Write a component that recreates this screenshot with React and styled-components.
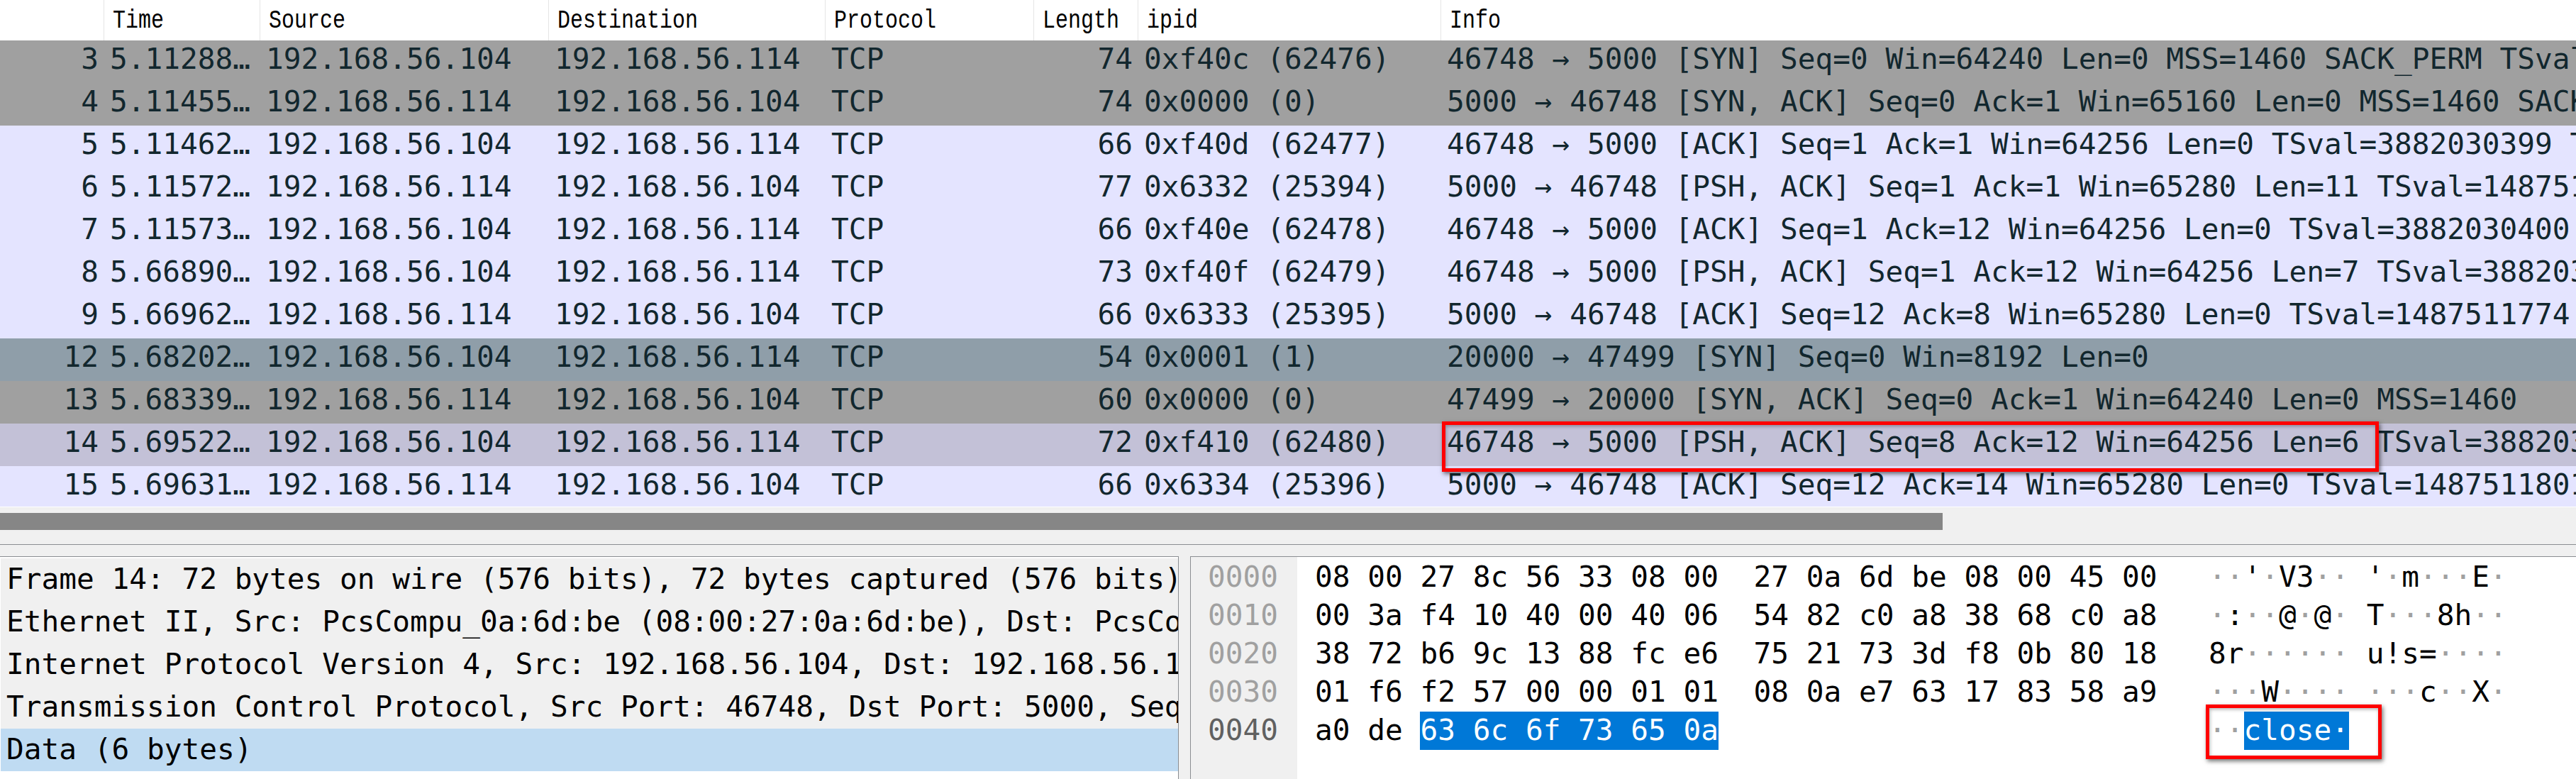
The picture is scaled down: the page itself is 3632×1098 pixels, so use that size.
import styled, { createGlobalStyle } from "styled-components";

const MONO = `"DejaVu Sans Mono", "Liberation Mono", monospace`;

const COLUMNS = "147px 220px 407px 390px 294px 147px 427px 1fr";

const columns = [
  { label: "" },
  { label: "Time" },
  { label: "Source" },
  { label: "Destination" },
  { label: "Protocol" },
  { label: "Length" },
  { label: "ipid" },
  { label: "Info" },
];

const ME = "192.168.56.104";
const PEER = "192.168.56.114";

const packets = [
  { no: 3, time: "5.11288…", src: ME, dst: PEER, len: 74, ipid: "0xf40c (62476)", info: "46748 → 5000 [SYN] Seq=0 Win=64240 Len=0 MSS=1460 SACK_PERM TSval", tone: "grey" },
  { no: 4, time: "5.11455…", src: PEER, dst: ME, len: 74, ipid: "0x0000 (0)", info: "5000 → 46748 [SYN, ACK] Seq=0 Ack=1 Win=65160 Len=0 MSS=1460 SACK", tone: "grey" },
  { no: 5, time: "5.11462…", src: ME, dst: PEER, len: 66, ipid: "0xf40d (62477)", info: "46748 → 5000 [ACK] Seq=1 Ack=1 Win=64256 Len=0 TSval=3882030399 T", tone: "light" },
  { no: 6, time: "5.11572…", src: PEER, dst: ME, len: 77, ipid: "0x6332 (25394)", info: "5000 → 46748 [PSH, ACK] Seq=1 Ack=1 Win=65280 Len=11 TSval=148751", tone: "light" },
  { no: 7, time: "5.11573…", src: ME, dst: PEER, len: 66, ipid: "0xf40e (62478)", info: "46748 → 5000 [ACK] Seq=1 Ack=12 Win=64256 Len=0 TSval=3882030400", tone: "light" },
  { no: 8, time: "5.66890…", src: ME, dst: PEER, len: 73, ipid: "0xf40f (62479)", info: "46748 → 5000 [PSH, ACK] Seq=1 Ack=12 Win=64256 Len=7 TSval=388203", tone: "light" },
  { no: 9, time: "5.66962…", src: PEER, dst: ME, len: 66, ipid: "0x6333 (25395)", info: "5000 → 46748 [ACK] Seq=12 Ack=8 Win=65280 Len=0 TSval=1487511774", tone: "light" },
  { no: 12, time: "5.68202…", src: ME, dst: PEER, len: 54, ipid: "0x0001 (1)", info: "20000 → 47499 [SYN] Seq=0 Win=8192 Len=0", tone: "slate" },
  { no: 13, time: "5.68339…", src: PEER, dst: ME, len: 60, ipid: "0x0000 (0)", info: "47499 → 20000 [SYN, ACK] Seq=0 Ack=1 Win=64240 Len=0 MSS=1460", tone: "grey" },
  { no: 14, time: "5.69522…", src: ME, dst: PEER, len: 72, ipid: "0xf410 (62480)", info: "46748 → 5000 [PSH, ACK] Seq=8 Ack=12 Win=64256 Len=6 TSval=388203", tone: "picked", marked: true },
  { no: 15, time: "5.69631…", src: PEER, dst: ME, len: 66, ipid: "0x6334 (25396)", info: "5000 → 46748 [ACK] Seq=12 Ack=14 Win=65280 Len=0 TSval=1487511801", tone: "light", short: true },
];

const details = [
  "Frame 14: 72 bytes on wire (576 bits), 72 bytes captured (576 bits)",
  "Ethernet II, Src: PcsCompu_0a:6d:be (08:00:27:0a:6d:be), Dst: PcsCo",
  "Internet Protocol Version 4, Src: 192.168.56.104, Dst: 192.168.56.1",
  "Transmission Control Protocol, Src Port: 46748, Dst Port: 5000, Seq",
];

const dump = [
  { offset: "0000", hex: "08 00 27 8c 56 33 08 00  27 0a 6d be 08 00 45 00", ascii: "··'·V3·· '·m···E·" },
  { offset: "0010", hex: "00 3a f4 10 40 00 40 06  54 82 c0 a8 38 68 c0 a8", ascii: "·:··@·@· T···8h··" },
  { offset: "0020", hex: "38 72 b6 9c 13 88 fc e6  75 21 73 3d f8 0b 80 18", ascii: "8r······ u!s=····" },
  { offset: "0030", hex: "01 f6 f2 57 00 00 01 01  08 0a e7 63 17 83 58 a9", ascii: "···W···· ···c··X·" },
  { offset: "0040", hex: "a0 de ", picked: "63 6c 6f 73 65 0a", ascii: "··", pickedAscii: "close·", active: true },
];

const toneColors = {
  grey: "#a0a0a0",
  light: "#e4e4ff",
  slate: "#8f9ea9",
  picked: "#c3c1d7",
};

const GlobalStyle = createGlobalStyle`
  html, body {
    margin: 0;
    padding: 0;
    background: #f0f0f0;
  }
`;

const Window = styled.div`
  width: 3632px;
  height: 1098px;
  overflow: hidden;
  display: flex;
  flex-direction: column;
  background: #f0f0f0;
  font-family: ${MONO};
  font-size: 41.1px;
`;

const HeaderRow = styled.div`
  display: grid;
  grid-template-columns: ${COLUMNS};
  height: 57px;
  background: #fff;
`;

const HeaderCell = styled.div`
  height: 57px;
  overflow: hidden;
  padding-left: 12px;
  border-right: 1px solid #e5e5e5;
  font-family: "Liberation Mono", monospace;
  font-size: 30px;
  line-height: 58px;
  color: #000;

  &:last-child {
    border-right: 0;
  }

  span {
    display: inline-block;
    transform: scaleY(1.25);
  }
`;

const PacketRow = styled.div`
  position: relative;
  display: grid;
  grid-template-columns: ${COLUMNS};
  height: ${({ $short }) => ($short ? 57 : 60)}px;
  background: ${({ $tone }) => toneColors[$tone]};
  color: #12272e;
  line-height: 53px;
  white-space: pre;
`;

const Cell = styled.div`
  min-width: 0;
  overflow: hidden;
  padding: 0 ${({ $right }) => ($right ? "8px" : "0")} 0 ${({ $right }) => ($right ? "0" : "8px")};
  text-align: ${({ $right }) => ($right ? "right" : "left")};
`;

const Callout = styled.div`
  position: absolute;
  box-sizing: border-box;
  border: 5px solid #ff0000;
  box-shadow: 2px 3px 6px rgba(0, 0, 0, 0.55), inset 1px 2px 5px rgba(0, 0, 0, 0.3);
  pointer-events: none;
  z-index: 2;
`;

const RowCallout = styled(Callout)`
  left: 2033px;
  top: -3px;
  width: 1321px;
  height: 71px;
`;

const AsciiCallout = styled(Callout)`
  left: -4px;
  top: -10px;
  width: 248px;
  height: 77px;
`;

const TableEnd = styled.div`
  height: 8px;
  border-top: 1px solid #fff;
`;

const Scrollbar = styled.div`
  flex: none;
  height: 24px;
  padding-bottom: 20px;
`;

const ScrollThumb = styled.div`
  width: 2739px;
  height: 24px;
  background: #868686;
`;

const Splitter = styled.div`
  flex: none;
  height: 16px;
  border-top: 1px solid #8a8d91;
`;

const Panes = styled.div`
  flex: 1;
  min-height: 0;
  display: grid;
  grid-template-columns: 1662px 1fr;
  column-gap: 16px;
`;

const DetailPane = styled.div`
  border-top: 1px solid #8a8d91;
  border-right: 1px solid #8a8d91;
  background: #fff;
  padding: 2px 0 0 1px;
  overflow: hidden;
`;

const DetailRow = styled.div`
  height: 60px;
  padding-left: 8px;
  line-height: 58px;
  overflow: hidden;
  white-space: pre;
  color: #000;
  background: ${({ $selected }) => ($selected ? "#bfdbf2" : "#f0f0f0")};
`;

const BytesPane = styled.div`
  display: grid;
  grid-template-columns: 150px 1285px 1fr;
  border-top: 1px solid #8a8d91;
  border-left: 1px solid #8a8d91;
  background: #fff;
  overflow: hidden;
`;

const OffsetColumn = styled.div`
  padding: 2px 0 0 24px;
  background: #f0f0f0;
`;

const ByteColumn = styled.div`
  padding: 2px 0 0 25px;
`;

const AsciiColumn = styled.div`
  padding-top: 2px;
`;

const DumpLine = styled.div`
  position: relative;
  height: 54px;
  line-height: 52px;
  white-space: pre;
  color: ${({ $color }) => $color || "#000"};
`;

const Dim = styled.span`
  color: #a0a0a0;
`;

const Picked = styled.span`
  display: inline-block;
  height: 54px;
  vertical-align: top;
  background: #0078d7;
  color: #fff;
`;

const AsciiText = ({ text }) =>
  text.split("").map((ch, i) => (ch === "·" ? <Dim key={i}>·</Dim> : ch));

const App = () => {
  return (
    <Window>
      <GlobalStyle />
      <HeaderRow>
        {columns.map((col, i) => (
          <HeaderCell key={i}>
            <span>{col.label}</span>
          </HeaderCell>
        ))}
      </HeaderRow>

      {packets.map((p) => (
        <PacketRow key={p.no} $tone={p.tone} $short={p.short}>
          <Cell $right>{p.no}</Cell>
          <Cell>{p.time}</Cell>
          <Cell>{p.src}</Cell>
          <Cell>{p.dst}</Cell>
          <Cell>TCP</Cell>
          <Cell $right>{p.len}</Cell>
          <Cell>{p.ipid}</Cell>
          <Cell>{p.info}</Cell>
          {p.marked && <RowCallout />}
        </PacketRow>
      ))}
      <TableEnd />

      <Scrollbar>
        <ScrollThumb />
      </Scrollbar>
      <Splitter />

      <Panes>
        <DetailPane>
          {details.map((line) => (
            <DetailRow key={line}>{line}</DetailRow>
          ))}
          <DetailRow $selected>Data (6 bytes)</DetailRow>
        </DetailPane>

        <BytesPane>
          <OffsetColumn>
            {dump.map((d) => (
              <DumpLine key={d.offset} $color={d.active ? "#606060" : "#a0a0a0"}>
                {d.offset}
              </DumpLine>
            ))}
          </OffsetColumn>
          <ByteColumn>
            {dump.map((d) => (
              <DumpLine key={d.offset}>
                {d.hex}
                {d.picked && <Picked>{d.picked}</Picked>}
              </DumpLine>
            ))}
          </ByteColumn>
          <AsciiColumn>
            {dump.map((d) => (
              <DumpLine key={d.offset}>
                <AsciiText text={d.ascii} />
                {d.pickedAscii && <Picked>{d.pickedAscii}</Picked>}
                {d.pickedAscii && <AsciiCallout />}
              </DumpLine>
            ))}
          </AsciiColumn>
        </BytesPane>
      </Panes>
    </Window>
  );
};

export default App;
